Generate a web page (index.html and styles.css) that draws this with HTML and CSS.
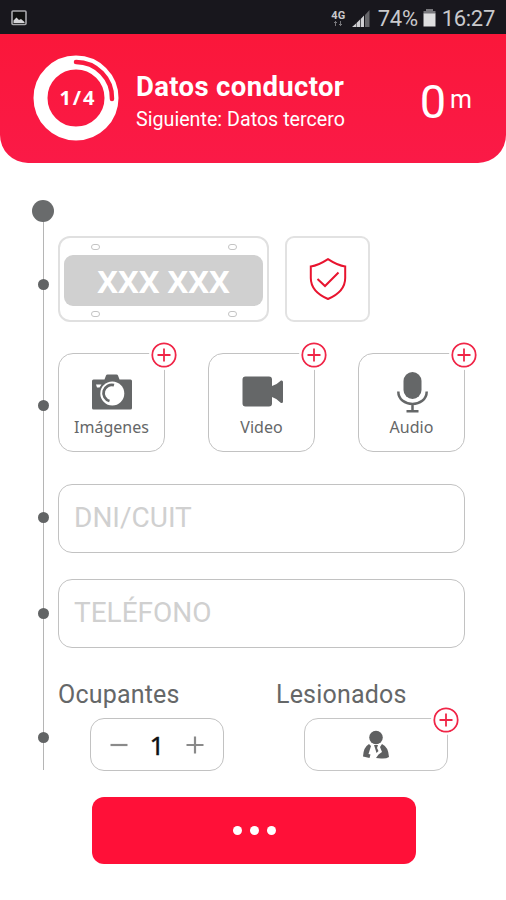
FILE: index.html
```html
<!DOCTYPE html>
<html lang="es">
<head>
  <meta charset="UTF-8" />
  <meta name="viewport" content="width=device-width, initial-scale=1" />
  <title>Datos conductor</title>
  <link rel="stylesheet" href="styles.css">
</head>
<body>

  <div class="status-bar">
    <svg class="status-picture" width="16" height="16" viewBox="0 0 16 16">
      <rect x="1" y="1" width="14" height="13.5" rx="1" fill="#111" stroke="#a9a9ad" stroke-width="1.6"/>
      <path d="M2.5 13V10.5L5.5 7.5L8 10L10 9L13.500 12V13Z" fill="#d5d5d8"/>
    </svg>
    <div class="status-right">
      <div class="network">
        <span>4G</span>
        <svg width="10" height="5" viewBox="0 0 10 5"><path d="M2.500 0V5M1 1.500H4M7.500 0V5M6 3.500H9" stroke="#77777b" stroke-width="1"/></svg>
      </div>
      <svg class="signal" width="18" height="17" viewBox="0 0 18 17">
        <path d="M0 17L4 13.500V17ZM4.500 13L8 9.500V17H4.500ZM8.700 9L12 5.500V17H8.700Z" fill="#d0d0d3"/>
        <path d="M13 5L17.500 0V17H13Z" fill="#66666a"/>
      </svg>
      <span class="battery-text">74%</span>
      <svg class="battery" width="13" height="18" viewBox="0 0 13 18">
        <path d="M3 0H10V2H12.500V5H0.500V2H3Z" fill="#77777b"/>
        <rect x="0.500" y="4.500" width="12" height="13" fill="#dededf"/>
      </svg>
      <span class="clock">16:27</span>
    </div>
  </div>

  <header class="header">
    <div class="progress">
      <svg width="86" height="86" viewBox="0 0 86 86">
        <circle cx="43" cy="43" r="35.500" fill="none" stroke="#fff" stroke-width="14"/>
        <path d="M43 7A36 36 0 0 1 79 44" fill="none" stroke="#fa193f" stroke-width="4.500" stroke-linecap="round"/>
      </svg>
      <span class="progress-text">1/4</span>
    </div>
    <div class="header-text">
      <h1>Datos conductor</h1>
      <p>Siguiente: Datos tercero</p>
    </div>
    <div class="distance"><span class="distance-value">0</span><span class="distance-unit">m</span></div>
  </header>

  <main class="form">
    <div class="rail">
      <i class="dot dot-start"></i>
      <i class="dot dot-plate"></i>
      <i class="dot dot-media"></i>
      <i class="dot dot-dni"></i>
      <i class="dot dot-phone"></i>
      <i class="dot dot-people"></i>
    </div>

    <div class="fields">
      <div class="row vehicle">
        <div class="plate">
          <div class="screws"><i></i><i></i></div>
          <div class="plate-number">XXX XXX</div>
          <div class="screws"><i></i><i></i></div>
        </div>
        <div class="insurance">
          <svg width="38" height="42" viewBox="0 0 38 42" fill="none" stroke="#e8142f" stroke-width="2">
            <path d="M19 1.200C14 4.500 7.500 7.800 1.800 8.500V20C1.800 29 8.500 36.500 19 41C29.500 36.500 36.200 29 36.200 20V8.500C30.500 7.800 24 4.500 19 1.200Z"/>
            <path d="M8.500 21L16 28L29.500 14.500"/>
          </svg>
        </div>
      </div>

      <div class="row media">
        <div class="card">
          <svg class="add" width="26" height="26" viewBox="0 0 26 26"><circle cx="13" cy="13" r="11.700"/><path d="M13 6.500V19.500M6.500 13H19.500"/></svg>
          <svg class="card-icon" width="42" height="42" viewBox="0 0 42 42">
            <path d="M2.500 7.500H13.500L15 3.500Q15.400 2.500 16.500 2.500H25.500Q26.600 2.500 27 3.500L28.500 7.500H39.500Q41 7.500 41 9V36Q41 37.500 39.500 37.500H2.500Q1 37.500 1 36V9Q1 7.500 2.500 7.500Z" fill="#656768"/>
            <path d="M5 12.500H10.500L8.500 15.500H6Z" fill="#fff"/>
            <circle cx="21.300" cy="21.500" r="12" fill="#fff"/>
            <path d="M23 13.200A8.200 8.200 0 0 0 18.500 29" fill="none" stroke="#656768" stroke-width="2.800"/>
          </svg>
          <span>Imágenes</span>
        </div>
        <div class="card">
          <svg class="add" width="26" height="26" viewBox="0 0 26 26"><circle cx="13" cy="13" r="11.700"/><path d="M13 6.500V19.500M6.500 13H19.500"/></svg>
          <svg class="card-icon" width="42" height="42" viewBox="0 0 42 42" fill="#656768">
            <path d="M4.500 4.500H28Q31 4.500 31 7.500V14Q36 12.500 40 8.500Q42 8 42 10V29.500Q42 31.500 40 31Q36 26.500 31 25V31.500Q31 34.500 28 34.500H4.500Q1.500 34.500 1.500 31.500V7.500Q1.500 4.500 4.500 4.500Z"/>
          </svg>
          <span>Video</span>
        </div>
        <div class="card">
          <svg class="add" width="26" height="26" viewBox="0 0 26 26"><circle cx="13" cy="13" r="11.700"/><path d="M13 6.500V19.500M6.500 13H19.500"/></svg>
          <svg class="card-icon" width="42" height="42" viewBox="0 0 42 42">
            <rect x="12.500" y="0" width="18" height="27" rx="9" fill="#656768"/>
            <path d="M7.300 19.500C7.300 36 35.700 36 35.700 19.500M21.500 32V39M15.500 39.300H27.500" fill="none" stroke="#656768" stroke-width="2.500"/>
          </svg>
          <span>Audio</span>
        </div>
      </div>

      <input class="text-field dni" type="text" placeholder="DNI/CUIT">
      <input class="text-field phone" type="text" placeholder="TELÉFONO">

      <div class="row people">
        <div class="people-group">
          <label>Ocupantes</label>
          <div class="counter">
            <svg width="18" height="18" viewBox="0 0 18 18"><path d="M0.500 9H17.500"/></svg>
            <span>1</span>
            <svg width="18" height="18" viewBox="0 0 18 18"><path d="M0.500 9H17.500M9 0.500V17.500"/></svg>
          </div>
        </div>
        <div class="people-group injured-group">
          <label>Lesionados</label>
          <div class="injured">
            <svg class="add" width="26" height="26" viewBox="0 0 26 26"><circle cx="13" cy="13" r="11.700"/><path d="M13 6.500V19.500M6.500 13H19.500"/></svg>
            <svg width="28" height="30" viewBox="0 0 28 30" fill="#5f6061">
              <circle cx="14" cy="7.500" r="6.800"/>
              <path d="M7 14L9 16L6.500 24L8.500 24.500L7.500 28L1 26.500Q1.500 17 7 14Z"/>
              <path d="M12 15H16L15 18L16.500 21L14.500 23L13 18Z"/>
              <path d="M20 14Q26.500 17 27 27Q24 29 19 28.500L14 28L16.500 24.500L20 22L18 17Z"/>
            </svg>
          </div>
        </div>
      </div>
    </div>
  </main>

  <button class="submit"><i></i><i></i><i></i></button>

</body>
</html>
```

FILE: styles.css
```css
* {
  box-sizing: border-box;
}

body {
  margin: 0;
  height: 900px;
  overflow: hidden;
  background: #fff;
  color: #656768;
  font-family: Roboto, "Liberation Sans", sans-serif;
}

svg {
  display: block;
  flex: none;
}

.status-bar {
  display: flex;
  align-items: center;
  justify-content: space-between;
  height: 34px;
  padding: 2px 11px 0;
  background: #18171d;
  color: #c9c9cc;
}

.status-right {
  display: flex;
  align-items: center;
  font-size: 22px;
  line-height: 30px;
}

.network {
  display: flex;
  flex-direction: column;
  align-items: center;
  width: 15px;
  margin-right: 6px;
  font-size: 11px;
  font-weight: 700;
  line-height: 10px;
}

.signal {
  margin-right: 8px;
}

.battery {
  margin: 0 6px 0 5px;
}

.battery-text,
.clock {
  padding-top: 2px;
  letter-spacing: -0.300px;
}

.header {
  display: flex;
  align-items: center;
  height: 129px;
  padding: 0 34px 2px 33px;
  border-radius: 0 0 28px 28px;
  background: linear-gradient(#fa173a, #fa1a47);
  color: #fff;
}

.progress {
  display: grid;
  place-items: center;
}

.progress > * {
  grid-area: 1 / 1;
}

.progress-text {
  font-family: "Open Sans", sans-serif;
  font-size: 20px;
  font-weight: 700;
  letter-spacing: 2px;
  padding-left: 4px;
}

.header-text {
  flex: 1;
  margin-left: 17px;
  padding-top: 11px;
}

.header-text h1 {
  margin: 0;
  font-size: 27.500px;
  font-weight: 700;
  letter-spacing: 0.350px;
  line-height: 32px;
}

.header-text p {
  margin: 0;
  font-size: 19.700px;
  line-height: 33px;
}

.distance {
  display: flex;
  align-items: center;
  gap: 4px;
  padding-top: 7px;
}

.distance-value {
  font-size: 47px;
}

.distance-unit {
  font-size: 25px;
  line-height: 30px;
  margin-top: -2px;
}

.form {
  display: flex;
  height: 570px;
  margin-top: 37px;
  padding-left: 32px;
}

.rail {
  display: flex;
  flex-direction: column;
  align-items: center;
  width: 23px;
  margin-right: 3px;
  background: linear-gradient(#b5b5b5, #b5b5b5) center 12px / 1px 100% no-repeat;
}

.dot {
  flex: none;
  width: 11px;
  height: 11px;
  border-radius: 50%;
  background: #626465;
}

.dot-start {
  width: 22px;
  height: 22px;
  margin-right: 1px;
  background: #696b6c;
}

.dot-plate {
  margin-top: 57px;
}

.dot-media {
  margin-top: 110px;
}

.dot-dni {
  margin-top: 101px;
}

.dot-phone {
  margin-top: 85px;
}

.dot-people {
  margin-top: 113px;
}

.fields {
  width: 407px;
  padding-top: 36px;
}

.row {
  display: flex;
}

.vehicle {
  gap: 16px;
}

.plate {
  width: 211px;
  height: 86px;
  padding: 4px;
  border: 2px solid #e0e0e0;
  border-radius: 12px;
}

.screws {
  display: flex;
  justify-content: space-between;
  padding: 2px 26px 5px 27px;
}

.screws i {
  width: 9px;
  height: 6px;
  border: 1.500px solid #c4c4c4;
  border-radius: 3px;
}

.plate-number {
  height: 51px;
  border-radius: 9px;
  background: #d0d0d0;
  color: #fff;
  font-family: "Noto Sans", sans-serif;
  font-size: 31px;
  font-weight: 700;
  line-height: 52px;
  text-align: center;
}

.plate-number + .screws {
  padding-top: 5px;
}

.insurance {
  display: grid;
  place-items: center;
  width: 85px;
  height: 86px;
  border: 2px solid #e2e2e2;
  border-radius: 9px;
}

.media {
  justify-content: space-between;
  margin-top: 31px;
}

.card {
  position: relative;
  display: flex;
  flex-direction: column;
  align-items: center;
  width: 107px;
  height: 99px;
  padding-top: 18px;
  border: 1.500px solid #c2c2c2;
  border-radius: 15px;
  font-family: "Noto Sans", sans-serif;
  font-size: 16px;
  line-height: 24px;
}

.card span {
  margin-top: 1px;
}

.add {
  position: absolute;
  top: -12px;
  right: -13px;
  border-radius: 50%;
  background: #fff;
  box-shadow: 0 0 0 2px #fff;
  fill: none;
  stroke: #f02648;
  stroke-width: 1.800;
}

.text-field {
  display: block;
  width: 407px;
  height: 69px;
  margin: 0;
  padding: 0 15px 3px;
  border: 1.500px solid #c2c2c2;
  border-radius: 14px;
  background: #fff;
  color: #656768;
  font-family: inherit;
  font-size: 28px;
  outline: none;
}

.text-field::placeholder {
  color: #d0d0d0;
}

.dni {
  margin-top: 32px;
}

.phone {
  margin-top: 26px;
}

.people {
  justify-content: space-between;
  margin-top: 30px;
}

.people-group {
  width: 166px;
}

.people label {
  display: block;
  height: 40px;
  font-size: 25px;
  line-height: 34px;
  letter-spacing: 0.200px;
}

.counter {
  display: flex;
  align-items: center;
  justify-content: space-between;
  height: 53px;
  margin-left: 32px;
  padding: 0 19px;
  border: 1.500px solid #c2c2c2;
  border-radius: 14px;
  color: #111;
  font-family: "Noto Sans", sans-serif;
  font-size: 26px;
  font-weight: 400;
  -webkit-text-stroke: 0.400px #111;
}

.counter svg {
  stroke: #8a8a8a;
  stroke-width: 2.200;
}

.people .injured-group {
  width: 189px;
}

.injured {
  position: relative;
  display: grid;
  place-items: center;
  width: 144px;
  height: 53px;
  margin-left: 28px;
  border: 1.500px solid #c6c6c6;
  border-radius: 14px;
}

.injured .add {
  right: -12px;
}

.submit {
  display: flex;
  align-items: center;
  justify-content: center;
  gap: 8px;
  width: 324px;
  height: 67px;
  margin: 27px 0 0 92px;
  padding: 0;
  border: none;
  border-radius: 12px;
  background: #ff1038;
  cursor: pointer;
}

.submit i {
  width: 9px;
  height: 9px;
  border-radius: 50%;
  background: #fff;
}
```
